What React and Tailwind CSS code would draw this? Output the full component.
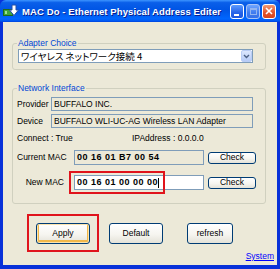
import React from 'react';

const font = "font-['Tahoma','Liberation_Sans',sans-serif]";
const xpBtn =
  'flex items-center justify-center rounded-[3px] border border-[#003C74] bg-[linear-gradient(180deg,#FFFFFF_0%,#F6F5F0_55%,#E4E2D8_100%)] text-black';

function TitleIcon() {
  return (
    <svg width="16" height="14" viewBox="0 0 16 14">
      <rect x="0.5" y="5.5" width="9" height="6" fill="#3FA53B" stroke="#1D6B1A" />
      <rect x="2" y="7" width="2" height="3" fill="#9BE08F" />
      <path d="M9 1 H13 V6 H15.5 L11 11.5 L6.5 6 H9 Z" fill="#FFFFFF" stroke="#2350A8" strokeWidth="1" />
    </svg>
  );
}

function CaptionButtons() {
  return (
    <div className="flex gap-[2px] mr-[4px]">
      <div className="relative w-[14px] h-[15px] rounded-[3px] border border-white bg-[linear-gradient(180deg,#5C9BFF_0%,#2663E8_60%,#1F57DE_100%)]">
        <div className="absolute left-[3px] bottom-[2px] w-[5px] h-[2px] bg-white" />
      </div>
      <div className="relative w-[14px] h-[15px] rounded-[3px] border border-[#A9C3F5] bg-[linear-gradient(180deg,#6FA5FF_0%,#3F7BEF_60%,#3670E8_100%)]">
        <div className="absolute left-[3px] top-[3px] w-[7px] h-[7px] border border-[#93B4F0] border-t-2" />
      </div>
      <div className="relative w-[14px] h-[15px] rounded-[3px] border border-white bg-[linear-gradient(180deg,#F29A74_0%,#E1522A_60%,#D6451D_100%)] flex items-center justify-center">
        <svg width="8" height="8" viewBox="0 0 8 8">
          <path d="M1 1 L7 7 M7 1 L1 7" stroke="#FFFFFF" strokeWidth="1.6" />
        </svg>
      </div>
    </div>
  );
}

export default function App() {
  return (
    <div className={`w-[280px] h-[269px] flex flex-col bg-[#0831D9] ${font} text-[8.5px] leading-[11px] text-black`}>
      {/* title bar */}
      <div className="h-[22px] flex items-center rounded-t-[6px] bg-[linear-gradient(180deg,#3D95FF_0%,#0A5FE9_12%,#0055E5_45%,#0066FF_85%,#0058F2_95%,#0040D8_100%)]">
        <div className="ml-[3px] mr-[3px]">
          <TitleIcon />
        </div>
        <div className="flex-1 text-white font-bold text-[9.5px] tracking-[0.1px] [text-shadow:1px_1px_0_#0A1E8C] whitespace-nowrap">
          MAC Do - Ethernet Physical Address Editer
        </div>
        <CaptionButtons />
      </div>

      {/* client area */}
      <div className="relative flex-1 mx-[3px] mb-[4px] bg-[#ECE9D8] flex flex-col pt-[16px]">
        <fieldset className="ml-[9px] w-[254px] border border-[#D0D0BF] rounded-[3px] pl-[5px] pr-[12px] pb-[6px]">
          <legend className="px-[1px] -ml-[1px] text-[#0046D5]">Adapter Choice</legend>
          <div className="h-[14px] flex items-center bg-white border border-[#7F9DB9]">
            <span className="flex-1 pl-[2px] font-['Noto_Sans_CJK_JP',sans-serif] text-[9.5px] [font-feature-settings:'palt'] whitespace-nowrap">
              ワイヤレス ネットワーク接続 4
            </span>
            <div className="w-[11px] h-[12px] rounded-[2px] bg-[linear-gradient(180deg,#DCE7FD_0%,#B6CBF7_100%)] border border-[#B9CDF6] flex items-center justify-center">
              <svg width="7" height="5" viewBox="0 0 7 5">
                <path d="M1 1 L3.5 3.5 L6 1" stroke="#4D6185" strokeWidth="1.4" fill="none" />
              </svg>
            </div>
          </div>
        </fieldset>

        <fieldset className="ml-[9px] mt-[13px] w-[254px] border border-[#D0D0BF] rounded-[3px] pl-[4px] pr-[9px] pb-[13px]">
          <legend className="px-[1px] text-[#0046D5]">Network Interface</legend>
          <div className="mt-[3px] flex items-center h-[14px]">
            <span className="w-[34px]">Provider</span>
            <div className="w-[202px] h-[14px] border border-[#7F9DB9] bg-[#ECE9D8] pl-[2px] flex items-center">BUFFALO INC.</div>
          </div>
          <div className="mt-[3px] flex items-center h-[14px]">
            <span className="w-[34px]">Device</span>
            <div className="w-[202px] h-[14px] border border-[#7F9DB9] bg-[#ECE9D8] pl-[2px] flex items-center whitespace-nowrap">BUFFALO WLI-UC-AG Wireless LAN Adapter</div>
          </div>
          <div className="mt-[4px] flex items-center h-[12px]">
            <span className="w-[115px]">Connect : True</span>
            <span>IPAddress : 0.0.0.0</span>
          </div>
          <div className="mt-[6px] flex items-center h-[15px]">
            <span className="w-[47px] text-right whitespace-nowrap">Current MAC</span>
            <div className="ml-[10px] w-[130px] h-[15px] border border-[#7F9DB9] bg-[#ECE9D8] pl-[2px] flex items-center font-bold text-[9px] tracking-[0.5px]">00 16 01 B7 00 54</div>
            <div className={`${xpBtn} ml-[4px] w-[48px] h-[12px] text-[8.5px]`}>Check</div>
          </div>
          <div className="mt-[10px] flex items-center h-[15px]">
            <span className="w-[47px] text-right whitespace-nowrap">New MAC</span>
            <div className="ml-[10px] w-[130px] h-[15px] border border-[#7F9DB9] bg-white pl-[2px] flex items-center font-bold text-[9px] tracking-[0.5px]">
              00 16 01 00 00 00<span className="w-[1px] h-[10px] bg-black" />
            </div>
            <div className={`${xpBtn} ml-[4px] w-[48px] h-[12px] text-[8.5px]`}>Check</div>
          </div>
        </fieldset>

        <div className="mt-[19px] flex items-center h-[21px]">
          <div className={`${xpBtn} ml-[33px] w-[54px] h-[21px] shadow-[inset_0_0_0_1px_#FCE4AE,inset_0_-1px_0_2px_#F1B84A]`}>Apply</div>
          <div className={`${xpBtn} ml-[19px] w-[54px] h-[21px]`}>Default</div>
          <div className={`${xpBtn} ml-[24px] w-[46px] h-[21px]`}>refresh</div>
        </div>

        <div className="mt-[7px] flex justify-end pr-[3px]">
          <span className="text-[#0000FF] underline">System</span>
        </div>

        {/* red annotation frames */}
        <div className="absolute left-[66px] top-[149px] w-[96px] h-[23px] border-2 border-[#E0141C]" />
        <div className="absolute left-[24px] top-[192px] w-[72px] h-[38px] border-2 border-[#E0141C]" />
      </div>
    </div>
  );
}
